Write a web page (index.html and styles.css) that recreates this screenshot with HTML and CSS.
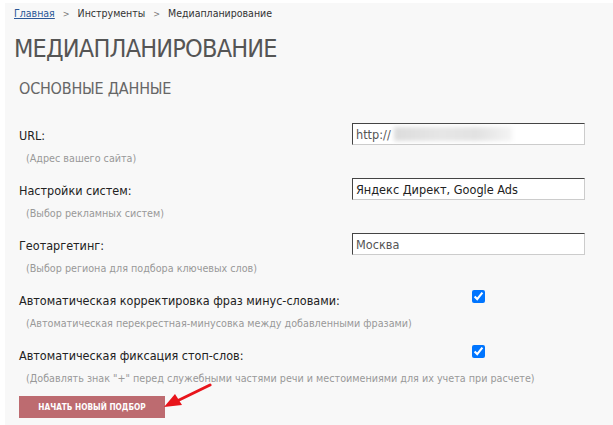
FILE: index.html
```html
<!DOCTYPE html>
<html lang="ru">
<head>
<meta charset="utf-8">
<link rel="stylesheet" href="styles.css">
</head>
<body>
<div class="page">
  <nav class="crumbs">
    <a href="#" class="crumb-link">Главная</a>
    <span class="sep">&gt;</span>
    <span>Инструменты</span>
    <span class="sep">&gt;</span>
    <span>Медиапланирование</span>
  </nav>
  <h1 class="title">МЕДИАПЛАНИРОВАНИЕ</h1>
  <h2 class="section">ОСНОВНЫЕ ДАННЫЕ</h2>
  <form class="form">
    <div class="row">
      <div class="label">URL:</div>
      <div class="control"><input class="field field-muted" type="text" value="http://"><span class="blur"></span></div>
      <div class="hint">(Адрес вашего сайта)</div>
    </div>
    <div class="row">
      <div class="label">Настройки систем:</div>
      <div class="control"><input class="field" type="text" value="Яндекс Директ, Google Ads"></div>
      <div class="hint">(Выбор рекламных систем)</div>
    </div>
    <div class="row">
      <div class="label">Геотаргетинг:</div>
      <div class="control"><input class="field field-muted" type="text" value="Москва"></div>
      <div class="hint">(Выбор региона для подбора ключевых слов)</div>
    </div>
    <div class="row row-check">
      <div class="label">Автоматическая корректировка фраз минус-словами:</div>
      <div class="control"><input class="check" type="checkbox" checked></div>
      <div class="hint">(Автоматическая перекрестная-минусовка между добавленными фразами)</div>
    </div>
    <div class="row row-check">
      <div class="label">Автоматическая фиксация стоп-слов:</div>
      <div class="control"><input class="check" type="checkbox" checked></div>
      <div class="hint">(Добавлять знак "+" перед служебными частями речи и местоимениями для их учета при расчете)</div>
    </div>
    <div class="actions">
      <button type="button" class="btn">НАЧАТЬ НОВЫЙ ПОДБОР</button>
      <svg class="arrow" width="50" height="30" viewBox="0 0 50 30">
        <line x1="46" y1="2" x2="11" y2="19" stroke="#e8141b" stroke-width="3" stroke-linecap="round"/>
        <polygon points="0,24 11,11 18,22" fill="#e8141b"/>
      </svg>
    </div>
  </form>
</div>
</body>
</html>
```
FILE: styles.css
```css
html, body {
  margin: 0;
  padding: 0;
  background: #ffffff;
}
body {
  padding: 3px 0 0 5px;
  font-family: "DejaVu Sans Condensed", "DejaVu Sans", sans-serif;
}
.page {
  background: #f8f8f8;
  height: 422px;
  padding: 0 0 0 9px;
  box-sizing: border-box;
}
.crumbs {
  font-size: 10.5px;
  line-height: 20px;
  color: #333;
}
.crumb-link {
  color: #2b5797;
  text-decoration: underline;
}
.sep {
  color: #777;
  font-size: 9px;
  margin: 0 5px;
}
.title {
  margin: 10px 0 0 0;
  font-size: 25px;
  letter-spacing: -0.8px;
  line-height: 30px;
  font-weight: normal;
  color: #555;
}
.section {
  margin: 15px 0 0 5px;
  font-size: 16px;
  letter-spacing: -0.2px;
  line-height: 20px;
  font-weight: normal;
  color: #666;
}
.form {
  margin: 24px 0 0 5px;
}
.row {
  display: grid;
  grid-template-columns: 333px 233px;
  grid-template-rows: 22px 26px;
  margin-bottom: 7px;
}
.label {
  grid-column: 1;
  grid-row: 1;
  padding-top: 2px;
  font-size: 12.5px;
  line-height: 22px;
  color: #222;
  white-space: nowrap;
}
.hint {
  grid-column: 1 / 3;
  grid-row: 2;
  padding-top: 1px;
  font-size: 10.7px;
  line-height: 26px;
  color: #999;
  padding-left: 7px;
  white-space: nowrap;
}
.control {
  grid-column: 2;
  grid-row: 1;
  position: relative;
}
.field {
  box-sizing: border-box;
  width: 233px;
  height: 22px;
  margin: 0;
  padding: 0 3px;
  border: 1px solid #ccc;
  border-top-color: #444;
  border-left-color: #444;
  background: #fff;
  font-family: inherit;
  font-size: 12.6px;
  color: #222;
  outline: none;
}
.field-muted {
  color: #555;
}
.blur {
  position: absolute;
  left: 42px;
  top: 4px;
  width: 118px;
  height: 14px;
  background: linear-gradient(90deg, #dcdcdc, #e6e6e6 40%, #e2e2e2 70%, #f4f4f4);
  filter: blur(2px);
}
.row-check .control {
  padding-left: 120px;
}
.check {
  width: 13px;
  height: 13px;
  margin: -3px 0 0 0;
  accent-color: #0075ff;
}
.actions {
  position: relative;
  margin-top: -3px;
}
.btn {
  width: 146px;
  height: 22px;
  border: none;
  background: #bd6b70;
  color: #fff;
  font-family: inherit;
  font-size: 8.2px;
  font-weight: bold;
  padding: 0;
  cursor: pointer;
}
.arrow {
  position: absolute;
  left: 145px;
  top: -12px;
}
```
